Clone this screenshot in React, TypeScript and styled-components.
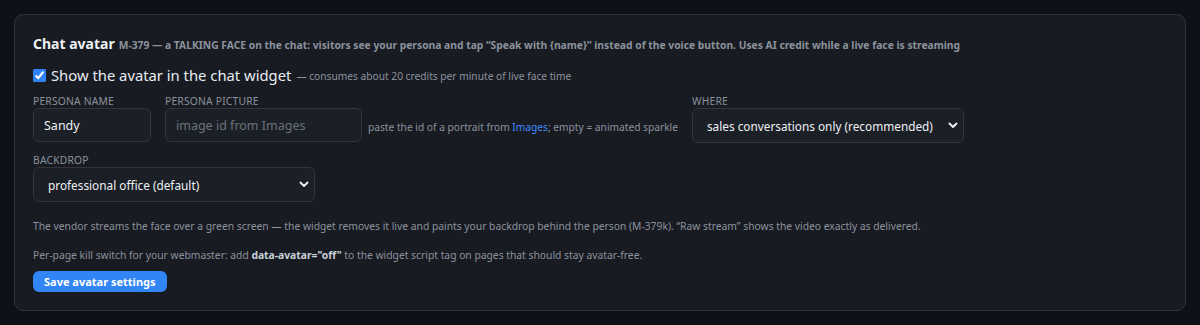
import React from "react";
import styled, { createGlobalStyle } from "styled-components";

const Global = createGlobalStyle`
  html, body { margin: 0; padding: 0; background: #0e1117; }
  body { font-family: "Noto Sans", "Open Sans", sans-serif; color: #e6edf3; }
  * { box-sizing: border-box; }
`;

const Page = styled.div`
  padding: 14px;
  width: 1200px;
  height: 325px;
`;

const Card = styled.section`
  background: #181b22;
  border: 1px solid #2e333b;
  border-radius: 9px;
  padding: 19px 18px 17px;
  height: 297px;
`;

const TitleRow = styled.div`
  display: flex;
  align-items: baseline;
  gap: 4px;
  white-space: nowrap;
  line-height: 20px;
`;

const Title = styled.h3`
  margin: 0;
  font-size: 14px;
  font-weight: 700;
  color: #eef1f5;
`;

const Sub = styled.span`
  font-size: 10.3px;
  font-weight: 700;
  color: #8b929c;
`;

const CheckRow = styled.label`
  display: flex;
  align-items: center;
  margin-top: 9px;
  white-space: nowrap;
  line-height: 20px;
`;

const Check = styled.input`
  width: 13px;
  height: 13px;
  margin: 0 5px 0 0;
  accent-color: #2f81f7;
`;

const CheckText = styled.span`
  font-size: 14.8px;
  color: #e6edf3;
`;

const Note = styled.span`
  font-size: 10.2px;
  color: #8b929c;
  margin-left: 5px;
  padding-top: 2px;
`;

const FieldRow = styled.div<{ $mt: number }>`
  display: flex;
  align-items: flex-start;
  gap: 14px;
  margin-top: ${(p) => p.$mt}px;
`;

const Field = styled.div`
  display: flex;
  flex-direction: column;
`;

const Label = styled.span`
  font-size: 10.3px;
  color: #8b929c;
  text-transform: uppercase;
  letter-spacing: 0.2px;
  line-height: 14px;
`;

const InputLine = styled.div`
  display: flex;
  align-items: center;
  gap: 6px;
`;

const TextInput = styled.input<{ $w: number }>`
  width: ${(p) => p.$w}px;
  height: 34px;
  background: #1b1f26;
  border: 1px solid #30353e;
  border-radius: 6px;
  color: #eef1f5;
  font-family: inherit;
  font-size: 12.5px;
  padding: 0 10px;
  outline: none;
  &::placeholder { color: #6b727c; }
`;

const Hint = styled.span`
  font-size: 10.2px;
  color: #8b929c;
  white-space: nowrap;
  padding-top: 4px;
`;

const Link = styled.a`
  color: #3d8bfd;
  text-decoration: none;
`;

const Select = styled.select<{ $w: number }>`
  width: ${(p) => p.$w}px;
  height: 35px;
  background: #1b1f26;
  border: 1px solid #30353e;
  border-radius: 6px;
  color: #eef1f5;
  font-family: inherit;
  font-size: 11.8px;
  padding: 0 14px;
  outline: none;
  appearance: none;
  background-image: url("data:image/svg+xml,%3Csvg xmlns='http://www.w3.org/2000/svg' width='10' height='7' viewBox='0 0 10 7'%3E%3Cpath d='M1.5 1.5 L5 5 L8.5 1.5' stroke='%23e6edf3' stroke-width='2' fill='none' stroke-linecap='round' stroke-linejoin='round'/%3E%3C/svg%3E");
  background-repeat: no-repeat;
  background-position: right 5px center;
`;

const Para = styled.p<{ $mt: number }>`
  margin: ${(p) => p.$mt}px 0 0;
  font-size: 10.3px;
  color: #8b929c;
  line-height: 15px;
  white-space: nowrap;
  b { color: #c9d1d9; font-weight: 700; }
`;

const Button = styled.button`
  margin-top: 8px;
  height: 21px;
  padding: 0 11px;
  background: #3185f5;
  color: #ffffff;
  border: none;
  border-radius: 6px;
  font-family: inherit;
  font-size: 11px;
  font-weight: 700;
`;

export default function App() {
  return (
    <>
      <Global />
      <Page>
        <Card>
          <TitleRow>
            <Title>Chat avatar</Title>
            <Sub>
              M-379 — a TALKING FACE on the chat: visitors see your persona and tap “Speak with {"{name}"}” instead of the voice button. Uses AI credit while a live face is streaming
            </Sub>
          </TitleRow>
          <CheckRow>
            <Check type="checkbox" defaultChecked />
            <CheckText>Show the avatar in the chat widget</CheckText>
            <Note>— consumes about 20 credits per minute of live face time</Note>
          </CheckRow>
          <FieldRow $mt={8}>
            <Field>
              <Label>Persona name</Label>
              <TextInput $w={118} defaultValue="Sandy" />
            </Field>
            <Field>
              <Label>Persona picture</Label>
              <InputLine>
                <TextInput $w={197} placeholder="image id from Images" />
                <Hint>
                  paste the id of a portrait from <Link>Images</Link>; empty = animated sparkle
                </Hint>
              </InputLine>
            </Field>
            <Field>
              <Label>Where</Label>
              <Select $w={272} defaultValue="sales">
                <option value="sales">sales conversations only (recommended)</option>
              </Select>
            </Field>
          </FieldRow>
          <FieldRow $mt={10}>
            <Field>
              <Label>Backdrop</Label>
              <Select $w={282} defaultValue="office">
                <option value="office">professional office (default)</option>
              </Select>
            </Field>
          </FieldRow>
          <Para $mt={17}>
            The vendor streams the face over a green screen — the widget removes it live and paints your backdrop behind the person (M-379k). “Raw stream” shows the video exactly as delivered.
          </Para>
          <Para $mt={14}>
            Per-page kill switch for your webmaster: add <b>data-avatar="off"</b> to the widget script tag on pages that should stay avatar-free.
          </Para>
          <Button>Save avatar settings</Button>
        </Card>
      </Page>
    </>
  );
}
